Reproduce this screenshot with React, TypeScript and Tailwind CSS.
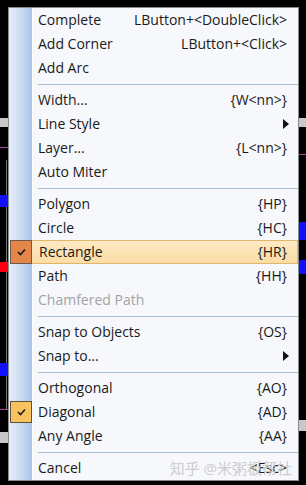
import React from "react";

type Item =
  | { sep: true }
  | {
      sep?: false;
      label: string;
      key?: string;
      sub?: boolean;
      disabled?: boolean;
      check?: "hot" | "on";
    };

const items: Item[] = [
  { label: "Complete", key: "LButton+<DoubleClick>" },
  { label: "Add Corner", key: "LButton+<Click>" },
  { label: "Add Arc" },
  { sep: true },
  { label: "Width...", key: "{W<nn>}" },
  { label: "Line Style", sub: true },
  { label: "Layer...", key: "{L<nn>}" },
  { label: "Auto Miter" },
  { sep: true },
  { label: "Polygon", key: "{HP}" },
  { label: "Circle", key: "{HC}" },
  { label: "Rectangle", key: "{HR}", check: "hot" },
  { label: "Path", key: "{HH}" },
  { label: "Chamfered Path", disabled: true },
  { sep: true },
  { label: "Snap to Objects", key: "{OS}" },
  { label: "Snap to...", sub: true },
  { sep: true },
  { label: "Orthogonal", key: "{AO}" },
  { label: "Diagonal", key: "{AD}", check: "on" },
  { label: "Any Angle", key: "{AA}" },
  { sep: true },
  { label: "Cancel", key: "<Esc>" },
];

function Check() {
  return (
    <svg width="9" height="8" viewBox="0 0 9 8">
      <path d="M1 4 L3.5 6.5 L8 1.5" fill="none" stroke="#1b1b1b" strokeWidth="1.6" />
    </svg>
  );
}

function Gutter() {
  return <div className="w-[24px] shrink-0 self-stretch bg-gradient-to-r from-[#e6eff9] via-[#cadcf1] to-[#a8c4e6] border-r border-white" />;
}

export default function App() {
  return (
    <div className="relative w-[306px] h-[485px] bg-black overflow-hidden" style={{ fontFamily: '"Open Sans", "Noto Sans CJK SC", sans-serif' }}>
      {/* canvas bits behind the menu */}
      <div className="absolute left-0 top-[118px] w-[8px] h-[9px] bg-[#c8c8c8]" />
      <div className="absolute left-0 top-[147px] w-[8px] h-[1px] bg-[#b03cb0]" />
      <div className="absolute left-[6px] top-[160px] w-[1px] h-[250px] bg-[#777]" />
      <div className="absolute left-0 top-[195px] w-[8px] h-[12px] bg-[#1010ff]" />
      <div className="absolute left-0 top-[262px] w-[8px] h-[10px] bg-[#ff0010]" />
      <div className="absolute left-0 top-[363px] w-[8px] h-[13px] bg-[#1010ff]" />
      <div className="absolute left-0 top-[409px] w-[8px] h-[1px] bg-[#b03cb0]" />
      <div className="absolute left-0 top-[432px] w-[8px] h-[11px] bg-[#c8c8c8]" />
      <div className="absolute left-[299px] top-[118px] w-[7px] h-[9px] bg-[#c8c8c8]" />
      <div className="absolute left-[299px] top-[154px] w-[7px] h-[1px] bg-[#b03cb0]" />
      <div className="absolute left-[299px] top-[222px] w-[7px] h-[18px] bg-[#1010ff]" />
      <div className="absolute left-[299px] top-[260px] w-[7px] h-[14px] bg-[#1010ff]" />
      <div className="absolute left-[299px] top-[420px] w-[7px] h-[11px] bg-[#c8c8c8]" />

      <div className="absolute left-[8px] top-[7px] w-[291px] border border-[#8a8a8a] bg-[#f6f8fb] py-0 text-[14px] leading-none text-[#1a1a1a]">
        {items.map((it, i) => {
          if (it.sep) {
            return (
              <div key={i} className="flex h-[8px]">
                <Gutter />
                <div className="flex-1 flex items-center pl-[5px]">
                  <div className="w-full h-[1px] bg-[#a7bdd5]" />
                </div>
              </div>
            );
          }
          if (it.check === "hot") {
            return (
              <div key={i} className="flex h-[24px] pl-[1px]">
                <div className="w-[22px] shrink-0 flex items-center justify-center bg-[#e4854a] border border-[#6e5a48]">
                  <Check />
                </div>
                <div className="flex-1 flex items-center justify-between pl-[7px] pr-[10px] bg-gradient-to-b from-[#fde9c2] to-[#fbdca4] border border-l-0 border-[#e2b56e]">
                  <span>{it.label}</span>
                  <span>{it.key}</span>
                </div>
              </div>
            );
          }
          return (
            <div key={i} className="relative flex h-[24px]">
              <Gutter />
              {it.check === "on" && (
                <div className="absolute left-[1px] top-[1px] w-[22px] h-[22px] flex items-center justify-center bg-[#f8c25f] border border-[#5e5240]">
                  <Check />
                </div>
              )}
              <div className={`flex-1 flex items-center justify-between pl-[5px] pr-[11px] ${it.disabled ? "text-[#a3a3a3]" : ""}`}>
                <span>{it.label}</span>
                {it.key && <span>{it.key}</span>}
                {it.sub && (
                  <svg width="6" height="10" viewBox="0 0 6 10" className="mr-[-2px]">
                    <path d="M0 0 L6 5 L0 10 Z" fill="#111" />
                  </svg>
                )}
              </div>
              {it.label === "Cancel" && (
                <span className="absolute right-[6px] top-[5px] text-[15px] text-[#c9c9c9] opacity-90">知乎 @米粥板帮社</span>
              )}
            </div>
          );
        })}
      </div>
    </div>
  );
}
